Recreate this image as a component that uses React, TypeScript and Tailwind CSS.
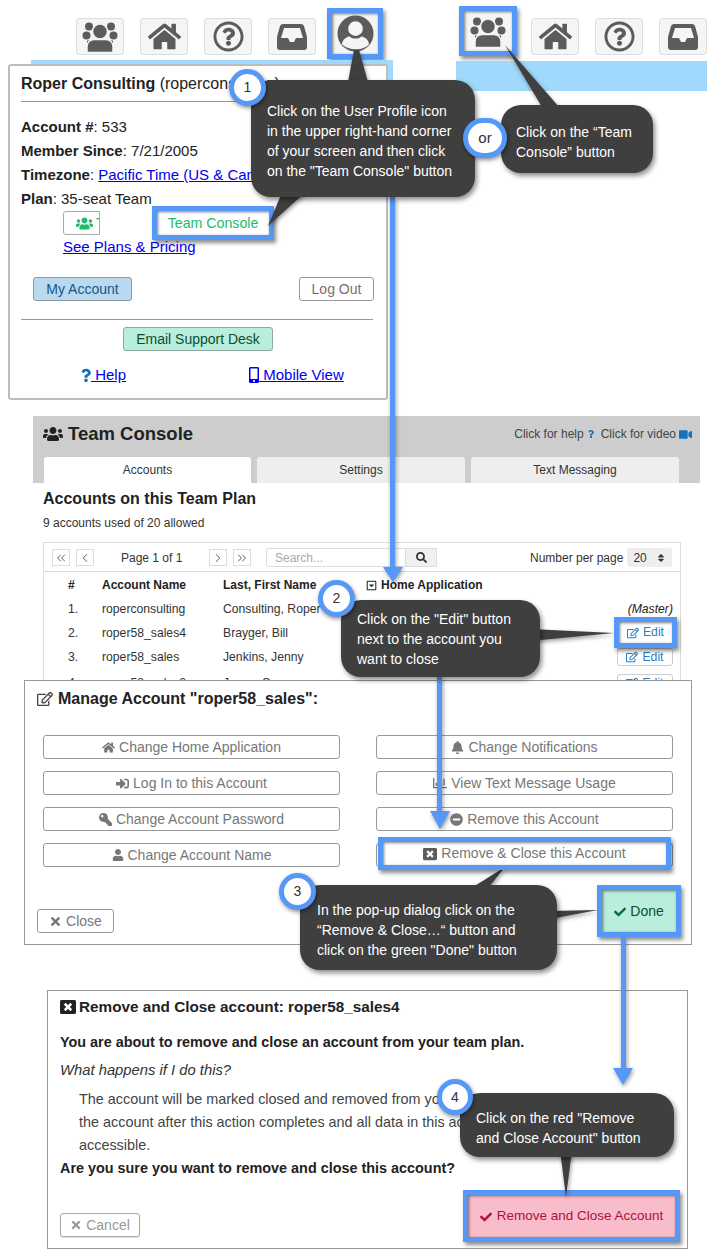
import { ReactNode } from "react"
import {
  FaBell,
  FaCheck,
  FaHome,
  FaKey,
  FaMinusCircle,
  FaMobileAlt,
  FaQuestion,
  FaRegCaretSquareDown,
  FaRegChartBar,
  FaRegEdit,
  FaRegQuestionCircle,
  FaSearch,
  FaSignInAlt,
  FaSort,
  FaTimes,
  FaUser,
  FaUsers,
  FaVideo,
  FaWindowClose,
} from "react-icons/fa"
import { ChevronLeft, ChevronRight, ChevronsLeft, ChevronsRight } from "lucide-react"

const BLUE_BOX =
  "border-[5px] border-[#5598f7] shadow-[2px_3px_4px_rgba(0,0,0,0.45),inset_1px_1px_3px_rgba(0,0,0,0.5)]"

function TeamIcon() {
  return (
    <svg viewBox="0 0 36 32" className="h-[33px] w-[36px]" fill="#5c5c5c">
      <circle cx="7" cy="6" r="4" />
      <circle cx="29" cy="6" r="4" />
      <circle cx="4.5" cy="15" r="4" />
      <circle cx="31.5" cy="15" r="4" />
      <path d="M5 20h26v4H5z" />
      <circle cx="18" cy="11" r="7.5" stroke="#f5f5f5" strokeWidth="1.5" />
      <path
        d="M5 32v-6c0-4 3-7 7-7h12c4 0 7 3 7 7v6z"
        stroke="#f5f5f5"
        strokeWidth="1.5"
      />
    </svg>
  )
}

function InboxIcon() {
  return (
    <svg viewBox="0 0 30 26" className="h-[26px] w-[30px]" fill="#5c5c5c">
      <path
        fillRule="evenodd"
        d="M6 0h18q2 0 3 2l3 11v10q0 3-3 3H3q-3 0-3-3V13L3 2Q4 0 6 0zM7 4L4 14h7l2 4h4l2-4h7L23 4z"
      />
    </svg>
  )
}

function ProfileIcon() {
  return (
    <svg viewBox="0 0 38 38" className="h-[37px] w-[37px]">
      <circle cx="19" cy="19" r="18.5" fill="#5c5c5c" />
      <circle cx="19" cy="14" r="7.5" fill="#f5f5f5" />
      <path d="M5 30c1-6 6-8 8-8 3 3 9 3 12 0 2 0 7 2 8 8-6 7-21 7-28 0z" fill="#f5f5f5" />
    </svg>
  )
}

function NavButton({ children }: { children: ReactNode }) {
  return (
    <div className="flex h-[37px] w-[48px] items-center justify-center rounded-[3px] border border-[#ddd] bg-[#f5f5f5] text-[#5c5c5c]">
      {children}
    </div>
  )
}

function NavIcons() {
  return (
    <>
      <NavButton>
        <FaHome size={33} />
      </NavButton>
      <NavButton>
        <FaRegQuestionCircle size={31} />
      </NavButton>
      <NavButton>
        <InboxIcon />
      </NavButton>
    </>
  )
}

function TopNav() {
  return (
    <div className="flex h-[55px] items-start pt-[18px]">
      <div className="ml-[76px] flex gap-4">
        <NavButton>
          <TeamIcon />
        </NavButton>
        <NavIcons />
      </div>
      <div className={`-mt-[10px] ml-[11px] flex h-[51px] w-[56px] items-center justify-center bg-[#f5f5f5] ${BLUE_BOX}`}>
        <ProfileIcon />
      </div>
      <div className="ml-[76px] flex gap-4">
        <div className={`-mt-[12px] -mr-[2px] flex h-[50px] w-[58px] items-center justify-center bg-[#f5f5f5] ${BLUE_BOX}`}>
          <TeamIcon />
        </div>
        <NavIcons />
      </div>
    </div>
  )
}

function AccountLine({ label, children }: { label: string; children: ReactNode }) {
  return (
    <div className="flex h-6 items-center text-[15px] text-[#222]">
      <b>{label}</b>
      <span className="whitespace-pre">: </span>
      {children}
    </div>
  )
}

function ProfilePanel() {
  return (
    <div className="relative ml-2 -mt-[27px] h-[336px] w-[380px] rounded-[3px] border-2 border-[#bdbdbd] bg-white pl-[11px] pr-[13px]">
      <div className="flex h-[36px] items-center border-b border-[#999] text-[16px] text-[#222]">
        <b>Roper Consulting</b>
        <span className="whitespace-pre"> (roperconsulting)</span>
      </div>
      <div className="mt-[13px]">
        <AccountLine label="Account #">533</AccountLine>
        <AccountLine label="Member Since">7/21/2005</AccountLine>
        <AccountLine label="Timezone">
          <a className="text-[#0000ee] underline">Pacific Time (US &amp; Canada)</a>
        </AccountLine>
        <AccountLine label="Plan">35-seat Team</AccountLine>
      </div>
      <div className="flex h-6">
        <div className="ml-[42px] flex h-6 w-[37px] items-center overflow-hidden whitespace-nowrap rounded-l-[3px] border border-[#aaa] pl-[12px] text-[14px] text-[#21bb68]">
          <FaUsers size={17} className="shrink-0" />
          <span className="ml-[3px]">Team Console</span>
        </div>
        <div className={`-mt-[5px] ml-[52px] flex h-[34px] w-[122px] items-center justify-center bg-white pt-px text-[14.2px] text-[#21bb68] ${BLUE_BOX}`}>
          Team Console
        </div>
      </div>
      <a className="ml-[42px] flex h-6 items-center text-[15px] text-[#0000ee] underline">See Plans &amp; Pricing</a>
      <div className="mt-[18px] -mr-px flex justify-between pl-3 text-[14px]">
        <button className="h-6 w-[99px] rounded-[3px] border border-[#8a9aa6] bg-[#bbd9ee] text-[#14568c]">My Account</button>
        <button className="h-6 w-[75px] rounded-[3px] border border-[#999] bg-white text-[#7a6f69]">Log Out</button>
      </div>
      <div className="mt-[18px] border-b border-[#999]" />
      <div className="mt-[7px] flex justify-center pl-[2px]">
        <button className="h-6 w-[150px] rounded-[3px] border border-[#8fa89f] bg-[#b8eedb] text-[14px] text-[#0d4d33]">Email Support Desk</button>
      </div>
      <div className="mt-[12px] flex h-6 items-center pl-[60px] text-[15px] text-[#0000ee]">
        <a className="flex items-center underline">
          <FaQuestion className="h-[15px] w-[10px] text-[#0a72c4]" />
          <span className="whitespace-pre"> Help</span>
        </a>
        <a className="ml-[123px] flex items-center underline">
          <FaMobileAlt className="h-4 w-[10px]" />
          <span className="whitespace-pre"> Mobile View</span>
        </a>
      </div>
    </div>
  )
}

const pagerBox = "flex h-[17px] w-[18px] items-center justify-center border border-[#ddd] text-[#444]"

const ACCOUNTS = [
  ["1.", "roperconsulting", "Consulting, Roper"],
  ["2.", "roper58_sales4", "Brayger, Bill"],
  ["3.", "roper58_sales", "Jenkins, Jenny"],
  ["4.", "roper58_sales2", "Jones, Sam"],
]

function AccountRow({ row, index }: { row: string[]; index: number }) {
  return (
    <div className={`grid h-6 grid-cols-[34px_121px_145px_1fr] items-center text-[12.2px] text-[#333] ${index === 3 ? "mt-[2px]" : ""}`}>
      <span>{row[0]}</span>
      <span>{row[1]}</span>
      <span>{row[2]}</span>
      <div className="flex justify-end pr-[7px]">
        {index === 0 ? (
          <i className="text-[#222]">(Master)</i>
        ) : (
          <button className="flex h-[18px] w-[56px] items-center justify-center gap-1 rounded-[3px] border border-[#ccc] text-[#2a7fc4]">
            <FaRegEdit size={12} /> Edit
          </button>
        )}
      </div>
    </div>
  )
}

function TeamConsole() {
  return (
    <div className="ml-[33px] mt-4 h-[264px] w-[667px] overflow-hidden bg-white">
      <div className="h-[67px] bg-[#cdcdcd] px-[11px]">
        <div className="mb-[5px] flex h-[36px] items-center justify-between -mr-[3px]">
          <div className="-ml-px flex items-center gap-[5px] text-[18.5px] font-bold text-[#222]">
            <FaUsers size={20} /> Team Console
          </div>
          <div className="flex items-center text-[12px] text-[#444]">
            Click for help
            <FaQuestion className="ml-[4px] h-[10px] w-[6px] text-[#1473bb]" />
            <span className="ml-[7px]">Click for video</span>
            <FaVideo size={13} className="ml-[3px] text-[#1473bb]" />
          </div>
        </div>
        <div className="flex gap-[6px] text-[12px] text-[#333]">
          <div className="flex h-[26px] w-[207px] items-center justify-center rounded-t-[3px] bg-white pb-px">Accounts</div>
          <div className="flex h-[26px] w-[208px] items-center justify-center rounded-t-[3px] bg-[#eee] pb-px">Settings</div>
          <div className="flex h-[26px] w-[208px] items-center justify-center rounded-t-[3px] bg-[#eee] pb-px">Text Messaging</div>
        </div>
      </div>
      <div className="px-[10px]">
        <h2 className="mt-[6px] text-[16px] leading-[20px] font-bold text-[#222]">Accounts on this Team Plan</h2>
        <p className="mt-[6px] text-[12px] leading-[16px] text-[#333]">9 accounts used of 20 allowed</p>
        <div className="mt-[11px] w-[638px] border border-[#ddd]">
          <div className="flex h-[29px] items-center border-b border-[#ddd] pl-2 pt-px text-[12px] text-[#333]">
            <div className={pagerBox}>
              <ChevronsLeft size={14} strokeWidth={1.5} />
            </div>
            <div className={`ml-[6px] ${pagerBox}`}>
              <ChevronLeft size={14} strokeWidth={1.5} />
            </div>
            <span className="ml-[27px] w-[88px]">Page 1 of 1</span>
            <div className={pagerBox}>
              <ChevronRight size={14} strokeWidth={1.5} />
            </div>
            <div className={`ml-[6px] ${pagerBox}`}>
              <ChevronsRight size={14} strokeWidth={1.5} />
            </div>
            <div className="ml-[15px] flex h-[19px] w-[140px] items-center rounded-l-[2px] border border-[#ddd] pl-2 text-[#aaa]">Search...</div>
            <div className="flex h-[19px] w-[31px] items-center justify-center border border-l-0 border-[#ddd] bg-[#f0f0f0]">
              <FaSearch size={11} />
            </div>
            <span className="ml-[93px]">Number per page</span>
            <div className="ml-[4px] flex h-[19px] w-[45px] items-center justify-between rounded-[3px] bg-[#eee] px-[6px]">
              20 <FaSort size={10} />
            </div>
          </div>
          <div className="pl-[24px] pt-px">
            <div className="grid h-6 grid-cols-[34px_121px_145px_1fr] items-center text-[12px] font-bold text-[#222]">
              <span>#</span>
              <span>Account Name</span>
              <span>Last, First Name</span>
              <span className="-ml-[2px] flex items-center gap-[4px]">
                <FaRegCaretSquareDown size={11} /> Home Application
              </span>
            </div>
            {ACCOUNTS.map((row, index) => (
              <AccountRow key={row[1]} row={row} index={index} />
            ))}
          </div>
        </div>
      </div>
    </div>
  )
}

function ManageButton({ icon, label }: { icon: ReactNode; label: string }) {
  return (
    <button className="flex h-[24px] items-center justify-center gap-1 rounded-[3px] border border-[#999] text-[14px] text-[#777]">
      {icon}
      {label}
    </button>
  )
}

function ManagePanel() {
  return (
    <div className="relative ml-[24px] h-[265px] w-[668px] border border-[#999] bg-white">
      <h2 className="ml-3 mt-[8px] flex h-5 items-center gap-[5px] text-[16px] font-bold text-[#222]">
        <FaRegEdit size={16} className="text-[#444]" /> Manage Account "roper58_sales":
      </h2>
      <div className="ml-[18px] mt-[26px] grid w-[630px] grid-cols-[297px_297px] gap-x-[36px] gap-y-[12px]">
        <ManageButton icon={<FaHome size={13} />} label="Change Home Application" />
        <ManageButton icon={<FaBell size={13} />} label="Change Notifications" />
        <ManageButton icon={<FaSignInAlt size={13} />} label="Log In to this Account" />
        <ManageButton icon={<FaRegChartBar size={14} />} label="View Text Message Usage" />
        <ManageButton icon={<FaKey size={13} className="-scale-x-100" />} label="Change Account Password" />
        <ManageButton icon={<FaMinusCircle size={13} />} label="Remove this Account" />
        <ManageButton icon={<FaUser size={12} />} label="Change Account Name" />
        <ManageButton icon={<FaWindowClose size={14} />} label="Remove & Close this Account" />
      </div>
      <div className="mt-[18px] flex items-end justify-between pl-3 pr-[10px]">
        <button className="mb-[4px] flex h-[24px] w-[77px] items-center justify-center gap-1 rounded-[3px] border border-[#999] text-[14px] text-[#777]">
          <FaTimes size={13} /> Close
        </button>
        <button className={`flex h-[52px] w-[84px] items-center justify-center gap-1 bg-[#b8eedb] pt-px text-[14px] text-[#0d4d33] ${BLUE_BOX}`}>
          <FaCheck size={12} className="text-[#0e6a3f]" /> Done
        </button>
      </div>
    </div>
  )
}

function RemovePanel() {
  return (
    <div className="ml-[47px] mt-[45px] h-[259px] w-[641px] border border-[#999] bg-white pl-3 text-[14.4px]">
      <h2 className="mt-[6px] flex h-5 items-center gap-[3px] text-[15.3px] font-bold text-[#222]">
        <FaWindowClose size={16} /> Remove and Close account: roper58_sales4
      </h2>
      <p className="mt-[15px] leading-5 font-bold text-[#222]">You are about to remove and close an account from your team plan.</p>
      <p className="mt-[8px] text-[14.8px] leading-5 text-[#333] italic">What happens if I do this?</p>
      <div className="mt-[8px] ml-[19px] whitespace-nowrap leading-[23px] text-[#444]">
        <p>The account will be marked closed and removed from your team plan. You cannot log in to</p>
        <p>the account after this action completes and all data in this account will no longer be</p>
        <p>accessible.</p>
      </div>
      <p className="mt-[1px] leading-5 font-bold text-[#222]">Are you sure you want to remove and close this account?</p>
      <div className="mt-[12px] flex items-end justify-between pr-[7px]">
        <button className="mb-[5px] flex h-[24px] w-[80px] items-center justify-center gap-1 rounded-[3px] border border-[#aaa] text-[14px] text-[#999] shadow-[0_1px_1px_rgba(0,0,0,0.15)]">
          <FaTimes size={12} /> Cancel
        </button>
        <button className={`flex h-[52px] w-[217px] items-center justify-center gap-[5px] bg-[#f9bccb] pt-px text-[13.5px] text-[#b0103c] ${BLUE_BOX}`}>
          <FaCheck size={12} /> Remove and Close Account
        </button>
      </div>
    </div>
  )
}

function Callout({ box, children }: { box: string; children: ReactNode }) {
  return (
    <div className={`absolute flex flex-col justify-center rounded-[20px] bg-[#3f3f3f] text-[14px] leading-5 text-white shadow-[2px_3px_5px_rgba(0,0,0,0.45)] ${box}`}>
      {children}
    </div>
  )
}

function Badge({ box, label }: { box: string; label: string }) {
  return (
    <div className={`absolute flex items-center justify-center rounded-full border-[5px] border-[#5598f7] bg-white text-[14px] text-[#333] shadow-[1px_2px_4px_rgba(0,0,0,0.45)] ${box}`}>
      {label}
    </div>
  )
}

// tails and arrows are drawn straight on the page, callouts sit on top of them
function Annotations() {
  return (
    <>
      <svg className="absolute inset-0 h-[1256px] w-[707px] drop-shadow-[1px_2px_2px_rgba(0,0,0,0.4)]" viewBox="0 0 707 1256">
        <path d="M390 197h5v370h8l-10 15-10-15h7z" fill="#5598f7" />
        <path d="M437 676h5v135h8l-10 18-10-18h7z" fill="#5598f7" />
        <path d="M621 937h5v131h7l-10 17-10-17h8z" fill="#5598f7" />
        <path d="M354 50h5l9 32h-20z" fill="#3f3f3f" />
        <path d="M283 190h25l-40 36z" fill="#3f3f3f" />
        <path d="M505 45l54 62h-17z" fill="#3f3f3f" />
        <path d="M530 629v12l84-8z" fill="#3f3f3f" />
        <path d="M473 887l32-20-16 20z" fill="#3f3f3f" />
        <path d="M550 911v8l48-9z" fill="#3f3f3f" />
        <path d="M560 1150h12l-6 47z" fill="#3f3f3f" />
      </svg>

      <Callout box="left-[251px] top-[80px] h-[117px] w-[224px] pl-4 pt-1">
        <p>Click on the User Profile icon</p>
        <p>in the upper right-hand corner</p>
        <p>of your screen and then click</p>
        <p>on the "Team Console" button</p>
      </Callout>
      <Callout box="left-[501px] top-[105px] h-[68px] w-[152px] pl-[15px] pt-[6px]">
        <p>Click on the “Team</p>
        <p>Console” button</p>
      </Callout>
      <Callout box="left-[341px] top-[600px] h-[77px] w-[199px] pl-4">
        <p>Click on the "Edit" button</p>
        <p>next to the account you</p>
        <p>want to close</p>
      </Callout>
      <Callout box="left-[300px] top-[885px] h-[85px] w-[257px] pl-[17px] pt-[5px]">
        <p>In the pop-up dialog click on the</p>
        <p>“Remove &amp; Close…“ button and</p>
        <p>click on the green "Done" button</p>
      </Callout>
      <Callout box="left-[460px] top-[1093px] h-[64px] w-[214px] pl-[16px] pt-[6px]">
        <p>Click on the red "Remove</p>
        <p>and Close Account" button</p>
      </Callout>

      <Badge box="left-[229px] top-[69px] h-[37px] w-[37px]" label="1" />
      <Badge box="left-[463px] top-[118px] h-[40px] w-[44px] text-[15px]" label="or" />
      <Badge box="left-[318px] top-[580px] h-[37px] w-[37px]" label="2" />
      <Badge box="left-[279px] top-[873px] h-[37px] w-[37px]" label="3" />
      <Badge box="left-[437px] top-[1079px] h-9 w-9" label="4" />

      <div className={`absolute left-[614px] top-[617px] h-[31px] w-[63px] ${BLUE_BOX} flex items-center justify-center gap-1 bg-white text-[12.2px] text-[#2a7fc4]`}>
        <FaRegEdit size={12} /> Edit
      </div>
      <div className={`absolute left-[378px] top-[837px] h-[33px] w-[293px] ${BLUE_BOX} flex items-center justify-center gap-1 bg-white text-[14px] text-[#777]`}>
        <FaWindowClose size={14} className="text-[#5c5c5c]" /> Remove &amp; Close this Account
      </div>
    </>
  )
}

export default function App() {
  return (
    <div className="relative h-[1256px] w-[707px] overflow-hidden bg-white font-['Liberation_Sans',Arial,sans-serif]">
      <TopNav />
      <div className="mt-[5px] flex">
        <div className="ml-[31px] h-[31px] w-[362px] bg-[#a0d9fb]" />
        <div className="ml-[63px] mt-px h-[30px] w-[251px] bg-[#a0d9fb]" />
      </div>
      <ProfilePanel />
      <TeamConsole />
      <ManagePanel />
      <RemovePanel />
      <Annotations />
    </div>
  )
}
